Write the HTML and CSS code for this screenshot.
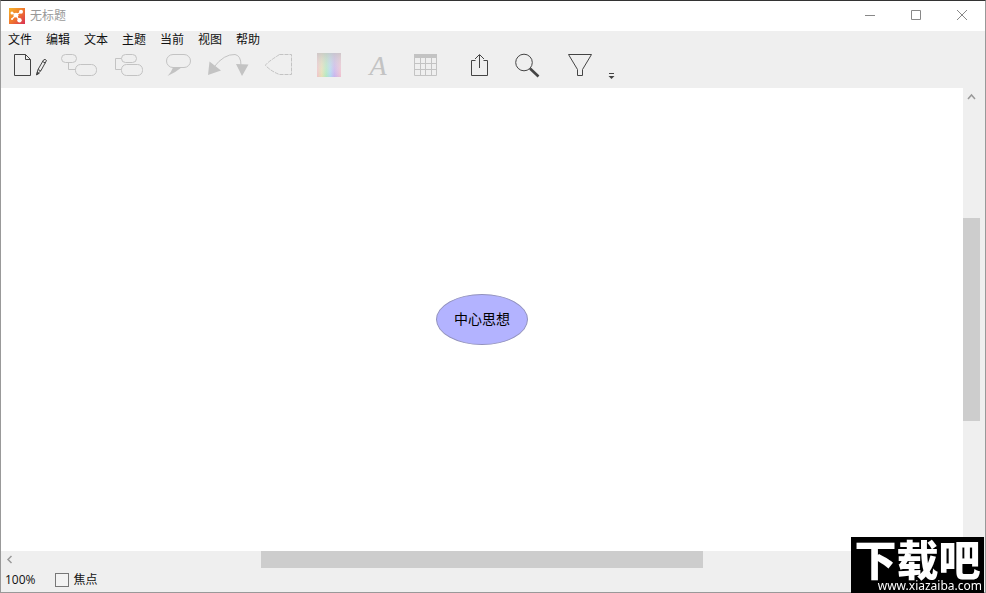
FILE: index.html
```
<!DOCTYPE html>
<html lang="zh-CN">
<head>
<meta charset="utf-8">
<title>无标题</title>
<link rel="stylesheet" href="styles.css">
</head>
<body>
<div class="window">
  <header class="titlebar">
    <svg class="app-icon" width="16" height="16" viewBox="0 0 16 16" aria-hidden="true">
      <defs><linearGradient id="app" x1="0" y1="0" x2="1" y2="1"><stop offset="0" stop-color="#f5b52a"/><stop offset=".5" stop-color="#f0782c"/><stop offset="1" stop-color="#d92f55"/></linearGradient></defs>
      <rect width="16" height="16" fill="url(#app)"/>
      <path d="M7 7L3 5M7 7L12 4M7 7L10 12M7 7L3 11" stroke="#fff" stroke-width="1.3"/>
      <g fill="#fff"><circle cx="7" cy="7.2" r="2.4"/><circle cx="3" cy="5" r="1.5"/><circle cx="12" cy="3.8" r="2"/><circle cx="10.5" cy="12.3" r="2.2"/><circle cx="3" cy="11" r="1"/></g>
    </svg>
    <h1 class="title">无标题</h1>
    <div class="controls">
      <button class="control" type="button" aria-label="最小化"><svg width="12" height="12" viewBox="0 0 12 12"><path d="M1 5.500h10"/></svg></button>
      <button class="control" type="button" aria-label="最大化"><svg width="12" height="12" viewBox="0 0 12 12"><path d="M1.500 .5h9v9h-9z"/></svg></button>
      <button class="control" type="button" aria-label="关闭"><svg width="12" height="12" viewBox="0 0 12 12"><path d="M1 0l10 10M11 0L1 10"/></svg></button>
    </div>
  </header>

  <nav class="menubar">
    <button class="menu" type="button">文件</button>
    <button class="menu" type="button">编辑</button>
    <button class="menu" type="button">文本</button>
    <button class="menu" type="button">主题</button>
    <button class="menu" type="button">当前</button>
    <button class="menu" type="button">视图</button>
    <button class="menu" type="button">帮助</button>
  </nav>

  <div class="toolbar" role="toolbar">
    <button class="tool" type="button" aria-label="新建"><svg width="50" height="40" viewBox="5 48 50 40">
      <path d="M14.500 54.500h11l5 5v16h-16zM25.500 54.500v5h5"/>
      <path d="M36.500 75l1.500-5.500 5.500-9.500q1.500-1.500 3 .5l-5.500 10zM38 69.500l3 1.500M42.500 61.500l3 1.500"/><path class="solid" d="M36.200 75.500l.8-4 2.800 2z"/></svg></button>
    <button class="tool tool-off" type="button" disabled aria-label="子主题"><svg width="50" height="40" viewBox="55 48 50 40">
      <rect x="61.500" y="54.500" width="15" height="8" rx="4"/><rect x="75.500" y="64.500" width="21" height="11" rx="5"/><path d="M68.500 62.500v7h7"/></svg></button>
    <button class="tool tool-off" type="button" disabled aria-label="同级主题"><svg width="50" height="40" viewBox="105 48 50 40">
      <rect x="121.500" y="54.500" width="15" height="8" rx="4"/><rect x="121.500" y="64.500" width="21" height="11" rx="5"/><path d="M121.500 58.500h-6v11h6"/></svg></button>
    <button class="tool tool-off" type="button" disabled aria-label="标注"><svg width="50" height="40" viewBox="155 48 50 40">
      <rect x="166.500" y="54.500" width="24" height="13" rx="6.500"/><path class="solid" d="M173 67.500h8.500q-6 5-14 8.500 4-4 5.500-8.500z"/></svg></button>
    <button class="tool tool-off" type="button" disabled aria-label="联系"><svg width="50" height="40" viewBox="205 48 50 40">
      <path d="M214 67q10-13 21-12.500 6 1 6 11"/><path class="solid" d="M209.500 61.500l11.500 9-13 4.500zM236 64l12.500.5-6.500 11.500z"/></svg></button>
    <button class="tool tool-off" type="button" disabled aria-label="外框"><svg width="50" height="40" viewBox="255 48 50 40">
      <path stroke-dasharray="4 1" d="M279.500 54.500h12v20h-12q-8-3-14-9 0-2 14-11z"/></svg></button>
    <button class="tool tool-off" type="button" disabled aria-label="颜色"><svg width="50" height="40" viewBox="305 48 50 40">
      <defs><linearGradient id="hue"><stop offset="0" stop-color="#efc2c8"/><stop offset=".2" stop-color="#e5e0b5"/><stop offset=".38" stop-color="#b2e8c0"/><stop offset=".55" stop-color="#b0d8ef"/><stop offset=".72" stop-color="#c7b3ee"/><stop offset="1" stop-color="#f0c0cd"/></linearGradient>
      <linearGradient id="shade" x2="0" y2="1"><stop offset="0" stop-color="#c8c8c8" stop-opacity=".8"/><stop offset="1" stop-color="#fff" stop-opacity="0"/></linearGradient></defs>
      <rect class="swatch" x="317" y="53" width="24" height="24" fill="url(#hue)"/><rect class="swatch" x="317" y="53" width="24" height="24" fill="url(#shade)"/></svg></button>
    <button class="tool tool-off tool-font" type="button" disabled aria-label="字体">A</button>
    <button class="tool tool-off" type="button" disabled aria-label="表格"><svg width="50" height="40" viewBox="405 48 50 40">
      <path class="solid" d="M414 54h23v3h-23z"/><path d="M414.500 54.500h22v21h-22zM414.500 57.500h22M414.500 63.500h22M414.500 69.500h22M420.500 57v18M425.500 57v18M431.500 57v18"/></svg></button>
    <button class="tool" type="button" aria-label="分享"><svg width="50" height="40" viewBox="455 48 50 40">
      <path d="M475.500 60.500h-4v15h16v-15h-4M479.500 68v-13M475 59l4.500-4.500 4.500 4.500"/></svg></button>
    <button class="tool" type="button" aria-label="搜索"><svg width="50" height="40" viewBox="505 48 50 40">
      <circle cx="524" cy="62.500" r="8.300"/><path d="M530 68.500l8.500 8" stroke-width="2.600"/></svg></button>
    <button class="tool" type="button" aria-label="筛选"><svg width="50" height="40" viewBox="555 48 50 40">
      <path d="M568.500 54.500h23l-9 15v6h-5v-6z"/></svg></button>
    <button class="tool tool-more" type="button" aria-label="更多"><svg width="14" height="40" viewBox="605 48 14 40">
      <path d="M609 73.500h5"/><path class="solid" d="M608.500 76h6l-3 3z"/></svg></button>
  </div>

  <main class="workspace">
    <section class="canvas"><div class="topic">中心思想</div></section>
    <div class="vscroll">
      <svg class="arrow-up" width="17" height="17" viewBox="0 0 17 17"><path d="M5 11l3.500-4L12 11"/></svg>
      <div class="vthumb"></div>
    </div>
    <div class="hscroll">
      <svg class="arrow-left" width="17" height="17" viewBox="0 0 17 17"><path d="M10.500 5L7 8.500l3.500 3.500"/></svg>
      <div class="hthumb"></div>
    </div>
  </main>

  <footer class="statusbar">
    <span class="zoom">100%</span>
    <label class="focus" for="focus"><input class="check" id="focus" type="checkbox">焦点</label>
  </footer>
</div>
<aside class="badge">
  <strong class="badge-name">下载吧</strong>
  <span class="badge-url">www.xiazaiba.com</span>
</aside>
</body>
</html>
```
FILE: styles.css
```
* {
  box-sizing: border-box;
}

body {
  margin: 0;
  font: 12px/16px "Open Sans", "Noto Sans CJK SC", sans-serif;
  color: #111;
}

button {
  margin: 0;
  padding: 0;
  border: 0;
  background: none;
  font: inherit;
  color: inherit;
}

.window {
  display: flex;
  flex-direction: column;
  min-height: 100vh;
  border: 1px solid #999;
  border-top-color: #333;
  background: #efefef;
}

.titlebar {
  display: flex;
  align-items: center;
  height: 30px;
  padding-left: 8px;
  background: #fff;
}

.title {
  margin: 0 0 0 5px;
  font-size: 12px;
  font-weight: 400;
  color: #999;
}

.controls {
  display: flex;
  margin-left: auto;
}

.control {
  display: grid;
  place-items: center;
  width: 46px;
  height: 30px;
}

.control svg {
  fill: none;
  stroke: #888;
}

.menubar {
  display: flex;
  gap: 14px;
  height: 17px;
  padding-left: 7px;
}

.menu {
  height: 17px;
}

.toolbar {
  display: flex;
  height: 40px;
  padding-left: 4px;
}

.tool {
  width: 50px;
  height: 40px;
  color: #444;
}

.tool-off {
  color: #c3c3c3;
}

.tool svg {
  display: block;
  fill: none;
  stroke: currentColor;
}

.tool .solid {
  fill: currentColor;
  stroke: none;
}

.tool .swatch {
  stroke: none;
}

.tool-font {
  padding: 0 4px 4px 0;
  font: italic 28px/36px "Liberation Serif", serif;
}

.tool-more {
  width: 14px;
}

.workspace {
  display: grid;
  flex: 1;
  grid-template-columns: 1fr 22px;
  grid-template-rows: 1fr 17px;
}

.canvas {
  display: grid;
  place-items: center;
  background: #fff;
}

.topic {
  padding: 14px 17px 15px;
  border: 1px solid #9292bd;
  border-radius: 50%;
  background: #b3b3ff;
  font-size: 14px;
  line-height: 20px;
  color: #000;
}

.vscroll,
.hscroll {
  position: relative;
}

.vscroll svg,
.hscroll svg {
  display: block;
  fill: none;
  stroke: #999;
  stroke-width: 1.5;
}

.vthumb {
  position: absolute;
  top: 28%;
  width: 17px;
  height: 44%;
  background: #cdcdcd;
}

.hthumb {
  position: absolute;
  top: 0;
  left: 27%;
  width: 46%;
  height: 17px;
  background: #cdcdcd;
}

.statusbar {
  display: flex;
  align-items: center;
  gap: 19px;
  height: 24px;
  padding-left: 4px;
}

.focus {
  display: flex;
  align-items: center;
  gap: 5px;
}

.check {
  appearance: none;
  width: 14px;
  height: 14px;
  margin: 0;
  border: 1px solid #777;
  background: #f3f3f3;
}

.badge {
  position: fixed;
  right: 2px;
  bottom: 0;
  display: flex;
  flex-direction: column;
  align-items: center;
  width: 133px;
  height: 56px;
  background: #000;
  color: #fff;
}

.badge-name {
  font: 900 42px/42px "Noto Sans CJK SC", sans-serif;
  white-space: nowrap;
}

.badge-url {
  align-self: flex-end;
  padding-right: 2px;
  font: 12px/14px "Noto Sans", sans-serif;
}
```
